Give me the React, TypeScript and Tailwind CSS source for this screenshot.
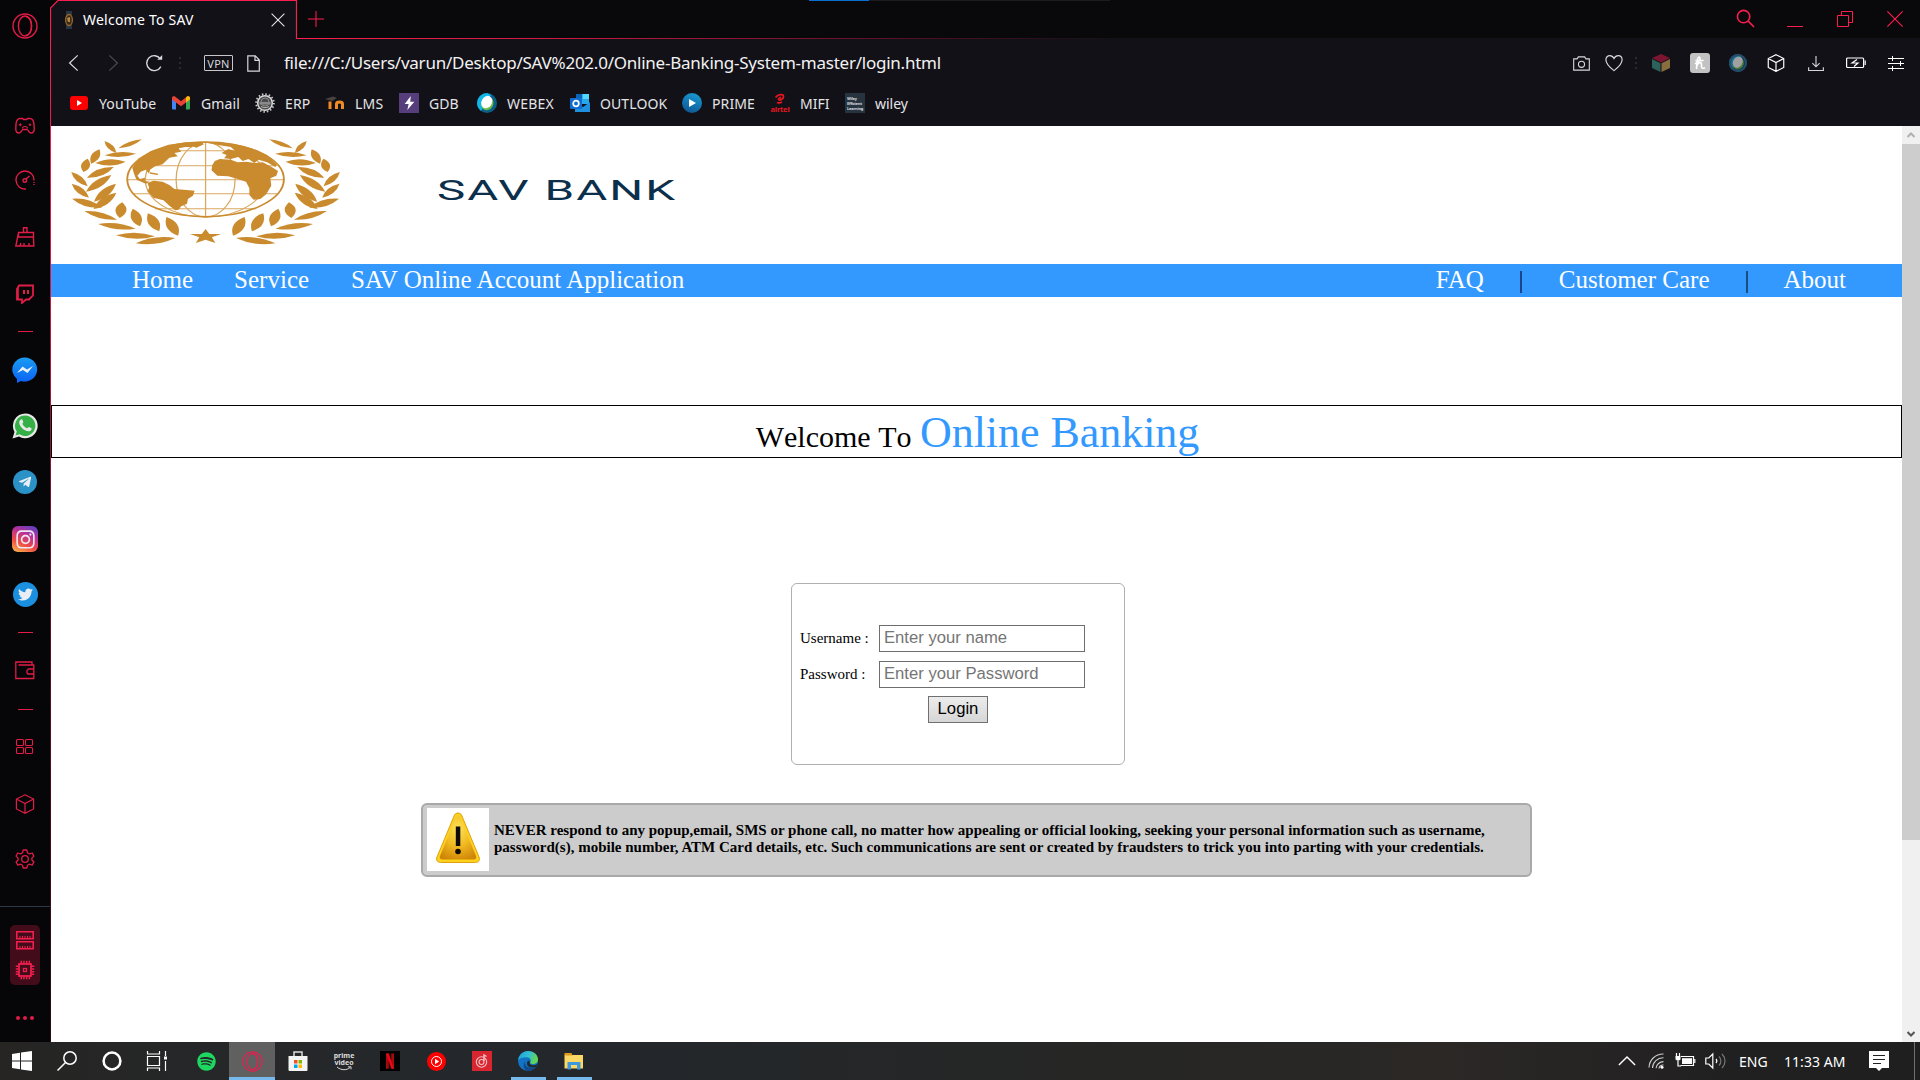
import React from "react";
import {
  FaSpotify,
  FaTwitter,
  FaInstagram,
  FaTelegramPlane,
} from "react-icons/fa";

type IconProps = { className?: string };

/* ---------- generic stroke icon ---------- */
function Line({
  size = 20,
  w = 1.2,
  className = "",
  children,
}: {
  size?: number;
  w?: number;
  className?: string;
  children: React.ReactNode;
}) {
  return (
    <svg
      width={size}
      height={size}
      viewBox="0 0 20 20"
      fill="none"
      stroke="currentColor"
      strokeWidth={w}
      className={`shrink-0 ${className}`}
    >
      {children}
    </svg>
  );
}

const OperaRing = ({ className = "" }: IconProps) => (
  <svg width="26" height="26" viewBox="0 0 26 26" fill="none" stroke="currentColor" strokeWidth="1.4" className={className}>
    <circle cx="13" cy="13" r="12" />
    <ellipse cx="13" cy="13" rx="6.6" ry="10" />
    <path d="M14 3.5c4 1 5.500 5 5.500 9.500s-1.500 8.500-5.500 9.500" />
  </svg>
);

const Box = ({ size = 20, w = 1.2 }: { size?: number; w?: number }) => (
  <Line size={size} w={w}>
    <path d="M10 .8l8.600 4.200v10L10 19.300 1.400 15V5zM1.400 5L10 9.500 18.600 5M10 9.500v9.800" />
  </Line>
);

const WebexBall = ({ className = "" }: IconProps) => (
  <svg width="20" height="20" viewBox="0 0 20 20" className={className}>
    <circle cx="10" cy="10" r="10" fill="#0b5f86" />
    <path d="M10 0a10 10 0 0 0-10 10c0 3 1.500 6 4 8L14 2z" fill="#12b5e8" />
    <ellipse cx="10.500" cy="10.300" rx="6" ry="6.800" transform="rotate(30 10 10)" fill="#6cc04a" />
    <ellipse cx="9.300" cy="9.300" rx="5.200" ry="6.500" transform="rotate(30 10 10)" fill="#fff" />
  </svg>
);

/* ---------- sidebar ---------- */
const Dash = () => <div className="h-px w-[15px] bg-[#e01c47]" />;

const Gamepad = () => (
  <Line size={20} w={1.4}>
    <path d="M5 2.500C2.800 2.500 1.500 4 1 8L.8 13C.8 15.800 2 17 4 17 6 17 6.200 14.500 8 13.500H12C13.800 14.500 14 17 16 17 18 17 19.200 15.800 19.200 13L19 8C18.500 4 17.200 2.500 15 2.500H12.500L11.500 3.500H8.500L7.500 2.500Z" />
    <path d="M7.500 12.500a2.500 2 0 0 1 5 0M3.800 8.800h3M5.300 7.300v3M13.800 8.800h2.400M15 7.600v2.400" strokeWidth="1.100" />
  </Line>
);
const Gauge = () => (
  <Line size={20} w={1.4}>
    <path d="M11 19A9 9 0 1 1 19 10.500" />
    <path d="M19 12v4" strokeDasharray="1 1" />
    <circle cx="9.800" cy="10.500" r="1.800" />
    <path d="M11 9l3.500-3" />
  </Line>
);
const Broom = () => (
  <Line size={20} w={1.4}>
    <path d="M8.500 5.500V.8h3.500v4.700M3.500 5.500h15v4.500h-15zM3.500 6L.8 19h18l-.3-9M5 19l.8-3M9 19v-3M14 19v-3" />
  </Line>
);
const Twitch = () => (
  <Line size={20} w={1.8}>
    <path d="M4 1.500h14v10l-4 4h-3l-4 3.500v-3.500H2V5z" />
    <path d="M2.800 4v11" strokeWidth="2" />
    <path d="M9 6v4M13 6v4" strokeWidth="2" />
  </Line>
);
const Messenger = () => (
  <svg width="26" height="26" viewBox="0 0 26 26">
    <defs>
      <linearGradient id="msg" x1="0" y1="0" x2="0" y2="1">
        <stop offset="0" stopColor="#1a9cf0" />
        <stop offset="1" stopColor="#0a62f5" />
      </linearGradient>
    </defs>
    <path d="M13 .5a12.300 12 0 1 1-4 23.400L5 26v-4A12 12 0 0 1 13 .5z" fill="url(#msg)" />
    <path d="M5 16l5.500-6.500 4.500 3 6-3.500-5.500 7-4.500-3z" fill="#e8f1fb" />
  </svg>
);
const WhatsApp = () => (
  <svg width="26" height="26" viewBox="0 0 26 26">
    <path d="M13.300.4A12.400 12.400 0 1 1 7 23.500L.5 25.500 2.500 19A12.500 12.500 0 0 1 13.300.4z" fill="#e8e8e8" />
    <path d="M13.300 2.600A10.200 10.200 0 1 1 7.500 21.300l-4 1.300 1.300-4A10.200 10.200 0 0 1 13.300 2.600z" fill="#35b046" />
    <path d="M9 6.500c1-.5 1.400 0 2.300 2.500.2.800-1 1.500-.8 2 1 2 2.500 3.500 4.500 4.200.6.200 1.300-1.500 2-1.300 2.500 1 3 1.300 2.500 2.500-1 2.500-4 2.300-7 .6C9 15 6.300 10.500 7.500 8c.3-.8.900-1.300 1.500-1.500z" fill="#e8e8e8" />
  </svg>
);
const Telegram = () => (
  <div className="flex size-6 items-center justify-center rounded-full bg-[#2a92c6] text-[#e8eef4]">
    <FaTelegramPlane size={14} />
  </div>
);
const Insta = () => (
  <div className="flex size-[26px] items-center justify-center rounded-[6px] bg-[linear-gradient(25deg,#f9b04a_5%,#ef4a45_35%,#b92f9a_65%,#4a46c8_100%)] text-[#efe8f0]">
    <FaInstagram size={21} />
  </div>
);
const Twitter = () => (
  <div className="flex size-[25px] items-center justify-center rounded-full bg-[#1b8fe0] text-[#e8eef4]">
    <FaTwitter size={15} />
  </div>
);
const Wallet = () => (
  <Line size={20} w={1.3}>
    <path d="M17 5V2H.8v16.500h18V5H3.500M18.800 9H13.500l-1.500 1.500V13l1 1h5.800" />
  </Line>
);
const Grid4 = () => (
  <Line size={20} w={1.1}>
    <rect x="1.500" y="2.500" width="7" height="6" rx="1" />
    <rect x="10.500" y="2.500" width="7" height="6" rx="1" />
    <rect x="1.500" y="10.500" width="7" height="6" rx="1" />
    <rect x="10.500" y="10.500" width="7" height="6" rx="1" />
  </Line>
);
const Gear = () => (
  <Line size={20} w={1.3}>
    <circle cx="10" cy="10" r="3.300" />
    <path d="M8.200 1h3.600l.7 2.800 1.900 1.100 2.800-.9 1.700 3.100-2 2v1.900l2 2-1.700 3.100-2.800-.9-1.900 1.100-.7 2.700H8.200l-.7-2.700-1.900-1.100-2.800.9L1.100 13l2-2V9.100l-2-2L2.800 4l2.800.9 1.900-1.100z" strokeLinejoin="round" />
  </Line>
);
const Ram = () => (
  <Line size={20} w={1.6}>
    <path d="M1.800 1.800h16.400v7H1.800zM1.800 11.800h16.400v7H1.800z" />
    <path d="M4.500 7h12M4.500 17h12" strokeDasharray="1 1.500" strokeWidth="2" />
  </Line>
);
const Chip = () => (
  <Line size={20} w={1.8}>
    <rect x="4" y="4" width="12" height="12" />
    <rect x="8.500" y="8.500" width="3" height="3" strokeWidth="1.300" />
    <path d="M5.500 2h10M5.500 18h10M2 5.500v10M18 5.500v10" strokeDasharray="1.500 1.200" strokeWidth="2.500" />
  </Line>
);

function Cell({ h, children }: { h: string; children: React.ReactNode }) {
  return <div className={`flex w-full shrink-0 items-center justify-center ${h}`}>{children}</div>;
}

function Sidebar() {
  return (
    <aside className="flex h-[1042px] w-[50px] shrink-0 flex-col items-center overflow-hidden bg-[#060608] text-[#e01c47]">
      <Cell h="h-[52px]"><OperaRing /></Cell>
      <div className="h-[47px] shrink-0" />
      <Cell h="h-[54px]"><Gamepad /></Cell>
      <Cell h="h-[54px]"><Gauge /></Cell>
      <Cell h="h-[60px]"><Broom /></Cell>
      <Cell h="h-[54px]"><Twitch /></Cell>
      <Cell h="h-[21px]"><Dash /></Cell>
      <Cell h="h-[56px]"><Messenger /></Cell>
      <Cell h="h-[56px]"><WhatsApp /></Cell>
      <Cell h="h-[56px]"><Telegram /></Cell>
      <Cell h="h-[58px]"><Insta /></Cell>
      <Cell h="h-[53px]"><Twitter /></Cell>
      <Cell h="h-[23px]"><Dash /></Cell>
      <Cell h="h-[52px]"><Wallet /></Cell>
      <Cell h="h-[27px]"><Dash /></Cell>
      <Cell h="h-[47px]"><Grid4 /></Cell>
      <Cell h="h-[68px]"><Box size={20} w={1.2} /></Cell>
      <Cell h="h-[42px]"><Gear /></Cell>
      <div className="mt-[26px] h-px w-full shrink-0 bg-[#2f3a48]" />
      <div className="mt-[18px] flex h-[60px] w-[30px] shrink-0 flex-col items-center justify-between rounded-[5px] bg-[#420c1b] py-[5px] text-[#f01f4d]">
        <Ram />
        <Chip />
      </div>
      <div className="mt-[31px] flex gap-[3px]">
        <i className="size-1 rounded-full bg-[#e01c47]" />
        <i className="size-1 rounded-full bg-[#e01c47]" />
        <i className="size-1 rounded-full bg-[#e01c47]" />
      </div>
    </aside>
  );
}

/* ---------- browser chrome ---------- */
function TabBar() {
  return (
    <div className="flex h-[39px] bg-[#09090b] text-[#fa1e4e]">
      <div className="relative flex h-[39px] w-[247px] shrink-0 items-center bg-[#121118] pl-[13px]">
        <svg width="247" height="39" className="absolute top-0 left-0">
          <path d="M0 0H8L0 8z" fill="#060608" />
          <path d="M.5 39V8L8 .5h238.500V39" fill="none" stroke="#fa1e4e" strokeWidth="1.200" />
        </svg>
        <svg width="12" height="18" viewBox="0 0 12 18">
          <path d="M3 0h6v4H3zM3 14h6v4H3z" fill="#2b3442" />
          <ellipse cx="6" cy="9" rx="3.400" ry="5.500" fill="#3a2c1c" stroke="#966a2e" strokeWidth="1.300" />
          <path d="M4 7l3-1v5H5z" fill="#b9863c" />
        </svg>
        <span className="ml-[8px] w-[188px] text-[14px] tracking-[0.230px] whitespace-nowrap text-white">Welcome To SAV</span>
        <Line size={16} w={1.3} className="absolute left-[220px] top-[12px] text-[#e8e8e8]">
          <path d="M2 2l16 16M18 2L2 18" />
        </Line>
      </div>
      <div className="flex flex-1 flex-col">
        <div className="flex flex-1">
          <Line size={16} w={1.3} className="mt-[11px] ml-[11px]">
            <path d="M10 0v20M0 10h20" />
          </Line>
          <div className="ml-[485px] h-px w-[60px] bg-[#0a6fd0]" />
          <div className="h-px w-[241px] bg-[#1c1c1f]" />
          <div className="ml-auto flex items-center pr-[16px]">
            <Line size={19} w={1.7} className="-mt-px">
              <circle cx="8" cy="8" r="6.500" />
              <path d="M12.800 12.800L19 19" />
            </Line>
            <div className="mt-[15px] ml-[32px] h-px w-4 bg-[#fa1e4e]" />
            <svg width="18" height="18" viewBox="0 0 18 18" fill="none" stroke="currentColor" className="ml-[33px]">
              <path d="M1.500 5.500h11v11h-11zM5.500 5.500v-4h11v11h-4" />
            </svg>
            <Line size={18} w={1.3} className="ml-[32px]">
              <path d="M1.500 1.500l17 17M18.500 1.500l-17 17" />
            </Line>
          </div>
        </div>
        <div className="h-px bg-[linear-gradient(90deg,#fa1e4e_0px,#d01a42_250px,#4a1022_640px,#121118_820px)]" />
      </div>
    </div>
  );
}

const Dots = ({ className = "" }: IconProps) => (
  <svg width="2" height="14" className={className}>
    <path d="M1 1v13" stroke="#44444c" strokeDasharray="2 3" />
  </svg>
);

function AddressBar() {
  return (
    <div className="flex h-[48px] items-center bg-[#121118] text-[#d8d8da]">
      <Line size={18} w={1.4} className="ml-[15px]">
        <path d="M13 1.500L4 10l9 8.500" />
      </Line>
      <Line size={18} w={1.4} className="ml-[19px] text-[#4a4a52]">
        <path d="M7 1.500L16 10l-9 8.500" />
      </Line>
      <Line size={18} w={1.5} className="ml-[25px]">
        <path d="M16.500 14a8.300 8.300 0 1 1-.5-8.500" />
        <path d="M18 1v5.500h-5.500z" fill="currentColor" stroke="none" />
      </Line>
      <Dots className="ml-[15px]" />
      <div className="ml-[23px] flex h-4 w-[29px] items-center justify-center rounded-[1px] border border-[#c8c8ca] text-[11px] leading-none tracking-[0.300px]">
        VPN
      </div>
      <svg width="13" height="17" viewBox="0 0 13 17" fill="none" stroke="currentColor" strokeWidth="1.200" className="ml-[14px]">
        <path d="M.8.8h7.500l4 4.200v11.200H.8zM8 .8V5.300h4.300" />
      </svg>
      <span className="ml-[24px] text-[17px] tracking-[-0.240px] whitespace-nowrap text-[#f2f2f2]">
        file:///C:/Users/varun/Desktop/SAV%202.0/Online-Banking-System-master/login.html
      </span>
      <div className="ml-auto flex items-center pr-[15px]">
        <Line size={17} w={1.3}>
          <path d="M.8 4.500h4l1.500-2.300h7.400l1.500 2.300h4v13.300H.8z" />
          <circle cx="10" cy="11" r="3.600" />
        </Line>
        <Line size={18} w={1.3} className="ml-[15px]">
          <path d="M10 18.500C4 14 1 11 1 6.500 1 3.500 3 1.800 5.300 1.800S9 3 10 5c1-2 2.500-3.200 4.700-3.200S19 3.500 19 6.500c0 4.500-3 7.500-9 12z" />
        </Line>
        <Dots className="ml-[12px]" />
        <svg width="20" height="20" viewBox="0 0 20 20" className="ml-[14px]">
          <path d="M10 1l9 4-9 4.500L1 5z" fill="#7c1530" />
          <path d="M1 6l8.500 4.200V19L1 15z" fill="#2c6259" />
          <path d="M19 6l-8.500 4.200V19l8.500-4z" fill="#8a6d3e" />
        </svg>
        <div className="ml-[19px] flex size-5 items-center justify-center rounded-[3px] bg-[#c2c2c2]">
          <svg width="12" height="14" viewBox="0 0 12 14" fill="none" stroke="#fff" strokeWidth="1.600" strokeLinecap="round">
            <path d="M1.500 7.500C5 6 7 3 5.500 1.200 3.500.5 3 5 2.500 12.500M3 9.500C4 6.500 7.500 5.500 7.500 8c0 2.500-.5 5 3 4M2 4.500h7" />
          </svg>
        </div>
        <div className="relative ml-[19px] size-[18px]">
          <WebexBall className="size-[18px] opacity-60" />
          <div className="absolute inset-0 rounded-full border-2 border-[#274d66]" />
        </div>
        <div className="ml-[20px] text-white"><Box size={18} w={1.3} /></div>
        <Line size={16} w={1.4} className="ml-[23px] mt-[2px]">
          <path d="M10 0v13M5.500 9l4.500 4.500L14.500 9M.8 14v4.200h18.400V14" />
        </Line>
        <svg width="20" height="12" viewBox="0 0 20 12" fill="none" stroke="#fff" strokeWidth="1.200" className="ml-[22px]">
          <rect x=".6" y="1" width="17" height="9.500" rx="1" />
          <path d="M19.200 3.500v4.500M11 2.500L6 6h6L8 9.500" />
        </svg>
        <svg width="17" height="16" viewBox="0 0 17 16" fill="none" stroke="#fff" className="ml-[22px]">
          <path d="M0 3.500h16M0 8.500h16M0 13.500h16M4.500 1v5M12.500 6v5M4.500 11v5" />
        </svg>
      </div>
    </div>
  );
}

const YouTube = () => (
  <div className="flex h-[14px] w-[18px] items-center justify-center rounded-[3px] bg-[#f00]">
    <svg width="6" height="6"><path d="M1 0l5 3-5 3z" fill="#fff" /></svg>
  </div>
);
const Gmail = () => (
  <svg width="18" height="14" viewBox="0 0 18 14">
    <path d="M0 2v10.500a1 1 0 0 0 1 1h3V5z" fill="#4285f4" />
    <path d="M18 2v10.500a1 1 0 0 1-1 1h-3V5z" fill="#34a853" />
    <path d="M0 2C0 .3 1.800-.2 3 .6l6 4.700 6-4.700c1.200-.8 3-.3 3 1.400v1.500L9 10.200 0 3.500z" fill="#ea4335" />
    <path d="M14 1.400l1-.8c1.200-.8 3-.3 3 1.400v1.500l-4 3z" fill="#fbbc04" />
  </svg>
);
const Erp = () => (
  <svg width="20" height="20" viewBox="0 0 20 20">
    <circle cx="10" cy="10" r="8.900" fill="none" stroke="#c8c8c8" strokeWidth="1.800" strokeDasharray="1.500 2" />
    <circle cx="10" cy="10" r="7.300" fill="#4a4a4a" stroke="#d8d8d8" strokeWidth="1.500" />
    <circle cx="10" cy="9" r="4" fill="none" stroke="#8c8c8c" />
    <path d="M4.500 9h11v2.500h-11z" fill="#8a8a8a" />
    <path d="M6 13.500c2.500 1.500 5.500 1.500 8 0" stroke="#b8b8b8" fill="none" />
  </svg>
);
const Moodle = () => (
  <svg width="20" height="20" viewBox="0 0 20 20" fill="none">
    <path d="M0 6l8-2.500 4 1.500-5 3z" fill="#4a4440" />
    <path d="M5 16V8.500M11.500 16v-5c0-2.600 6-2.600 6 0v5" stroke="#f08a24" strokeWidth="3" />
  </svg>
);
const Gdb = () => (
  <div className="flex size-5 items-center justify-center bg-[#563d7c]">
    <svg width="11" height="14" viewBox="0 0 12 16"><path d="M7.500 0L.5 9h4.500L3.500 16l8-9.500H6.800z" fill="#fff" /></svg>
  </div>
);
const Outlook = () => (
  <svg width="20" height="18" viewBox="0 0 20 18">
    <path d="M6 0h13v10H6z" fill="#28a8ea" />
    <path d="M6 0h6.500v5H6z" fill="#0a63b5" />
    <path d="M12.500 0H19v5h-6.500z" fill="#50d9ff" />
    <path d="M5 9l8 4 7-5v10H5z" fill="#1f8fe0" />
    <rect y="4" width="12" height="11" rx="1" fill="#0f6cd0" />
    <circle cx="6" cy="9.500" r="2.800" fill="none" stroke="#fff" strokeWidth="1.700" />
  </svg>
);
const Prime = () => (
  <div className="flex size-5 items-center justify-center rounded-full bg-[linear-gradient(20deg,#0d4f8c,#1aa0d8)]">
    <svg width="8" height="8"><path d="M1 0l7 4-7 4z" fill="#fff" /></svg>
  </div>
);
const Airtel = () => (
  <div className="flex h-5 w-[18px] flex-col items-center">
    <svg width="12" height="12" viewBox="0 0 12 12" fill="none" stroke="#e8151f" strokeWidth="1.800">
      <path d="M1.500 4.500C4 1 9.500.5 9.500 3.500S5 8 4.500 6.500C4.300 5.500 6 4.500 7 4.500M3 9.500c2 .8 3.500.5 5-.5" />
    </svg>
    <span className="text-[7.500px] leading-[8px] font-bold tracking-[-0.200px] text-[#e8151f]">airtel</span>
  </div>
);
const Wiley = () => (
  <div className="flex size-5 flex-col justify-center overflow-hidden bg-[#27333f] pl-[2px] text-[4px] leading-[5px] font-bold tracking-[-0.200px] whitespace-nowrap text-[#d8dde2]">
    <span>Wiley</span>
    <span>Efficient</span>
    <span>Learning</span>
  </div>
);

function Bookmark({ icon, label, w, ls = "" }: { icon: React.ReactNode; label: string; w: string; ls?: string }) {
  return (
    <div className={`flex shrink-0 items-center ${w}`}>
      <div className="flex w-5 shrink-0 items-center justify-center">{icon}</div>
      <span className={`ml-[10px] text-[14px] whitespace-nowrap ${ls}`}>{label}</span>
    </div>
  );
}

function Bookmarks() {
  return (
    <div className="flex h-[39px] bg-[#121118] pb-[7px] pl-[18px] text-[#e4e4e6]">
      <Bookmark w="w-[102px]" icon={<YouTube />} label="YouTube" ls="tracking-[0.100px]" />
      <Bookmark w="w-[84px]" icon={<Gmail />} label="Gmail" ls="tracking-[0.100px]" />
      <Bookmark w="w-[70px]" icon={<Erp />} label="ERP" ls="tracking-[0.100px]" />
      <Bookmark w="w-[74px]" icon={<Moodle />} label="LMS" ls="tracking-[0.200px]" />
      <Bookmark w="w-[78px]" icon={<Gdb />} label="GDB" />
      <Bookmark w="w-[93px]" icon={<WebexBall />} label="WEBEX" ls="tracking-[0.200px]" />
      <Bookmark w="w-[112px]" icon={<Outlook />} label="OUTLOOK" ls="tracking-[0.100px]" />
      <Bookmark w="w-[88px]" icon={<Prime />} label="PRIME" ls="tracking-[0.100px]" />
      <Bookmark w="w-[75px]" icon={<Airtel />} label="MIFI" />
      <Bookmark w="w-[80px]" icon={<Wiley />} label="wiley" />
    </div>
  );
}

/* ---------- bank page ---------- */
/* Each leaf: x1, y1, x2, y2, half width */
const LEAVES: number[][] = [
  [163, 84, 219, 57, 12],
  [130, 62, 158, 98, 14],
  [130, 105, 205, 100, 15],
  [98, 130, 118, 87, 20],
  [108, 128, 180, 124, 19],
  [80, 155, 90, 115, 21],
  [88, 172, 152, 140, 20],
  [51, 155, 90, 198, 17],
  [86, 214, 146, 164, 21],
  [52, 190, 93, 232, 17],
  [105, 244, 157, 190, 21],
  [53, 235, 124, 262, 19],
  [104, 266, 158, 217, 21],
  [82, 272, 160, 298, 17],
  [166, 293, 172, 246, 26],
  [115, 311, 204, 325, 17],
  [197, 265, 214, 318, 25],
  [157, 345, 250, 348, 18],
  [233, 279, 260, 333, 26],
  [204, 369, 298, 353, 18],
  [277, 290, 305, 346, 26],
];

function leafPath([x1, y1, x2, y2, w]: number[]) {
  const dx = x2 - x1;
  const dy = y2 - y1;
  const l = Math.hypot(dx, dy);
  const nx = (-dy / l) * w;
  const ny = (dx / l) * w;
  const mx = (x1 + x2) / 2;
  const my = (y1 + y2) / 2;
  return `M${x1} ${y1}Q${mx + nx} ${my + ny} ${x2} ${y2}Q${mx - nx} ${my - ny} ${x1} ${y1}Z`;
}

function Emblem() {
  return (
    <svg width="272" height="109" viewBox="48 50 646 327" preserveAspectRatio="none" fill="#c98b2e">
      <g>{LEAVES.map((l, i) => <path key={i} d={leafPath(l)} />)}</g>
      <g transform="translate(740 0) scale(-1 1)">{LEAVES.map((l, i) => <path key={i} d={leafPath(l)} />)}</g>
      <g fill="none" stroke="#d9a860" strokeWidth="3">
        <path d="M370 66V290M250 91h240M205 136h330M184 178h372M200 220h340M250 265h240" />
        <ellipse cx="370" cy="178" rx="70" ry="112" />
        <ellipse cx="370" cy="178" rx="143" ry="112" />
      </g>
      <ellipse cx="370" cy="177" rx="186" ry="112" fill="none" stroke="#c98b2e" strokeWidth="4.500" />
      <path d="M196 142L210 115 240 92 282 73 325 66 342 70 338 80 322 80 306 84 312 94 296 98 304 108 284 112 268 132 250 138 238 148 236 160 228 148 216 154 208 166 214 176 226 172 226 182 238 184 228 190 206 178 200 160Z" />
      <path d="M232 188L246 181 268 184 284 194 296 206 318 208 344 211 340 226 328 236 326 250 312 258 306 268 298 270 284 256 270 240 246 232 232 212 236 202Z" />
      <path d="M238 156l20 4-2 4-18-4zM336 66l24-2 6 8-18 10-16-8z" />
      <path d="M366 66L400 66 440 72 480 84 516 104 540 134 536 140 516 126 496 118 486 128 472 116 458 122 448 110 430 116 414 114 420 104 408 98 424 86 440 92 430 80 400 74Z" />
      <path d="M392 122L404 116 430 118 446 126 466 124 488 128 506 126 530 142 542 152 538 166 524 174 526 196 514 222 500 236 484 238 474 224 474 204 466 184 446 176 424 168 398 166 384 150 386 134Z" />
      <path d="M370 326l9 15h28l-22 10 8 17-23-10-23 10 8-17-22-10h28z" />
    </svg>
  );
}

function Warning() {
  return (
    <svg width="46" height="52" viewBox="0 0 46 52" className="-mt-[3px]">
      <defs>
        <radialGradient id="warn" cx=".5" cy=".3" r=".75">
          <stop offset="0" stopColor="#fde25a" />
          <stop offset=".5" stopColor="#f2bb22" />
          <stop offset="1" stopColor="#cf8608" />
        </radialGradient>
      </defs>
      <path d="M19.500 3c1.500-2.600 5.500-2.600 7 0l17.500 42c1.200 3-.5 5.500-3.500 5.500h-35C2.500 50.500.8 48 2 45z" fill="#fcd21c" stroke="#e0a010" />
      <path d="M20.500 5.500c1-1.800 4-1.800 5 0L41 44c.8 2-.3 3.500-2 3.500H7c-1.700 0-2.800-1.500-2-3.500z" fill="url(#warn)" />
      <path d="M20.800 14.500h4.500V34h-4.500z" fill="#100c04" />
      <circle cx="23" cy="39.500" r="2.800" fill="#100c04" />
    </svg>
  );
}

function Field({ label, placeholder }: { label: string; placeholder: string }) {
  return (
    <div className="flex h-9 items-start pl-[8px]">
      <label className="w-[79px] pt-[2px] text-[15px] leading-[22px]">{label}</label>
      <input
        placeholder={placeholder}
        className="h-[27px] w-[206px] border border-[#6e6e6e] bg-white pb-[2px] pl-1 font-['Liberation_Sans',Arial,sans-serif] text-[16.670px] placeholder:text-[#757575]"
      />
    </div>
  );
}

function Page() {
  return (
    <main className="flex h-[916px] w-[1851px] flex-col bg-white font-['Liberation_Serif','Times_New_Roman',serif] text-black">
      <header className="flex h-[138px] shrink-0">
        <div className="mt-[11px] ml-[19px]"><Emblem /></div>
        <div className="mt-[53px] ml-[95px] h-[24px] w-[240px]">
          <div className="origin-left scale-x-[1.700] font-[Roboto,sans-serif] text-[28px] leading-[24px] tracking-[1.200px] whitespace-nowrap text-[#0c2f4b]">
            SAV BANK
          </div>
        </div>
      </header>
      <nav className="flex h-[33px] shrink-0 items-center bg-[#3399ff] pr-[56px] pb-[2px] pl-[81px] text-[25px] leading-[31px] whitespace-nowrap text-white">
        <a>Home</a>
        <a className="ml-[41px]">Service</a>
        <a className="ml-[42px]">SAV Online Account Application</a>
        <a className="ml-auto">FAQ</a>
        <i className="mt-[4px] ml-[36px] h-[22px] w-[2px] bg-[#1b448c]" />
        <a className="ml-[37px]">Customer Care</a>
        <i className="mt-[4px] ml-[36px] h-[22px] w-[2px] bg-[#1a4d80]" />
        <a className="ml-[36px]">About</a>
      </nav>
      <h1 className="mt-[108px] flex h-[53px] shrink-0 items-baseline justify-center border border-black pl-[2px] text-[30px] leading-[54px] whitespace-pre">
        <span className="[font-kerning:none]">Welcome To </span>
        <span className="ml-px text-[44px] tracking-[-0.040px] text-[#3399ff]">Online Banking</span>
      </h1>
      <form className="mt-[125px] ml-[740px] h-[182px] w-[334px] shrink-0 rounded-[6px] border border-[#b0b0b0] pt-[41px]">
        <Field label="Username :" placeholder="Enter your name" />
        <Field label="Password :" placeholder="Enter your Password" />
        <button
          type="button"
          className="-mt-px ml-[136px] flex h-[27px] w-[60px] items-center justify-center border border-[#707070] bg-linear-to-b from-[#ececec] to-[#d6d6d6] pb-[2px] font-['Liberation_Sans',Arial,sans-serif] text-[16.670px]"
        >
          Login
        </button>
      </form>
      <section className="mt-[38px] ml-[370px] flex h-[74px] w-[1111px] shrink-0 items-center rounded-[6px] border-2 border-[#a9a9a9] bg-[#cccccc] pb-[2px] pl-1">
        <div className="flex h-[63px] w-[62px] shrink-0 items-center justify-center bg-white">
          <Warning />
        </div>
        <p className="ml-[5px] text-[15px] leading-[17px] font-bold whitespace-nowrap">
          NEVER respond to any popup,email, SMS or phone call, no matter how appealing or official looking, seeking your personal information such as username,
          <br />
          password(s), mobile number, ATM Card details, etc. Such communications are sent or created by fraudsters to trick you into parting with your credentials.
        </p>
      </section>
    </main>
  );
}

function Scrollbar() {
  return (
    <div className="flex w-[18px] flex-col bg-[#f0f0f0]">
      <div className="flex h-[18px] items-center justify-center">
        <svg width="8" height="6" fill="none" stroke="#b0b0b0" strokeWidth="2"><path d="M.5 5L4 1.500 7.500 5" /></svg>
      </div>
      <div className="h-[696px] bg-[#cdcdcd]" />
      <div className="mt-auto flex h-[16px] items-center justify-center">
        <svg width="8" height="6" fill="none" stroke="#555" strokeWidth="2"><path d="M.5 1L4 4.500 7.500 1" /></svg>
      </div>
    </div>
  );
}

/* ---------- taskbar ---------- */
function Task({ children, w = "w-[46px]", active = "", bar = "" }: { children: React.ReactNode; w?: string; active?: string; bar?: string }) {
  return (
    <div className={`relative flex h-full shrink-0 items-center justify-center ${w} ${active}`}>
      {children}
      {bar && <div className={`absolute bottom-0 h-[3px] bg-[#76b9ed] ${bar}`} />}
    </div>
  );
}

function Taskbar() {
  return (
    <footer className="flex h-[38px] bg-[linear-gradient(90deg,#262524_0%,#25282b_20%,#23272b_32%,#262624_60%,#2b2826_75%,#212021_90%,#1f1f20_100%)] text-white">
      <Task w="w-[44px]">
        <svg width="20" height="20" viewBox="0 0 20 20" fill="#fff">
          <path d="M0 3l8-1.200v7.700H0zM9 1.600L20 0v9.500H9zM0 10.500h8v7.700L0 17zM9 10.500h11V20L9 18.400z" />
        </svg>
      </Task>
      <Task w="w-[45px]">
        <Line size={20} w={1.5}><circle cx="13" cy="7" r="6.200" /><path d="M8.500 11.500L.5 19.500" /></Line>
      </Task>
      <Task w="w-[45px]">
        <Line size={20} w={2.5}><circle cx="10" cy="10" r="8.400" /></Line>
      </Task>
      <Task w="w-[49px]">
        <svg width="22" height="20" viewBox="0 0 22 20" fill="none" stroke="#fff" strokeWidth="1.200" className="-ml-[4px]">
          <path d="M1.500 5.500h12v9h-12zM1.500 0v3h12V0M1.500 20v-3h12v3M19.500 0v5M19.500 10v10" />
          <path d="M18 5.500h3v3h-3z" fill="#fff" stroke="none" />
        </svg>
      </Task>
      <Task><FaSpotify size={19} color="#1ed760" /></Task>
      <Task active="bg-[#606061]" bar="inset-x-0"><OperaRing className="size-[21px] text-[#ea1d4c]" /></Task>
      <Task>
        <svg width="20" height="20" viewBox="0 0 20 20" className="-ml-px">
          <path d="M6 6V1h8v5" fill="none" stroke="#dcdcdc" strokeWidth="1.500" />
          <path d="M.5 5h19v14a1 1 0 0 1-1 1h-17a1 1 0 0 1-1-1z" fill="#f4f4f4" />
          <path d="M6 9h3.500v3.500H6z" fill="#f25022" /><path d="M10.500 9H14v3.500h-3.500z" fill="#7fba00" />
          <path d="M6 13.500h3.500V17H6z" fill="#00a4ef" /><path d="M10.500 13.500H14V17h-3.500z" fill="#ffb900" />
        </svg>
      </Task>
      <Task>
        <div className="flex flex-col items-center text-[7px] font-bold text-[#dcdcdc]">
          <span className="h-[7px] leading-[7px]">prime</span>
          <span className="h-[7px] leading-[7px]">video</span>
          <svg width="16" height="5" fill="none" stroke="#dcdcdc"><path d="M1 1c4 3.500 10 3.500 13 .5M12 .8h3v2.500" /></svg>
        </div>
      </Task>
      <Task>
        <svg width="20" height="20" viewBox="0 0 20 20">
          <path d="M0 0h20v20H0z" fill="#000" />
          <path d="M6 2.500h2.800v15L6 18zM11.200 2.500H14V18l-2.800-.5z" fill="#a80812" />
          <path d="M6 2.500h2.800L14 18l-2.800-.5z" fill="#e50914" />
        </svg>
      </Task>
      <Task>
        <svg width="19" height="19" viewBox="0 0 19 19">
          <circle cx="9.500" cy="9.500" r="9.500" fill="#f00" />
          <circle cx="9.500" cy="9.500" r="5" fill="none" stroke="#fff" />
          <path d="M8 6.800l4.200 2.700L8 12.200z" fill="#fff" />
        </svg>
      </Task>
      <Task>
        <svg width="20" height="20" viewBox="0 0 20 20" fill="none" stroke="#f3c4c8" strokeWidth="1.100">
          <path d="M0 0h20v20H0z" fill="#d9252f" stroke="none" />
          <circle cx="9.500" cy="11" r="5.200" /><circle cx="9.500" cy="11" r="2.500" />
          <path d="M12 10V4l2.500 1.500" strokeWidth="1.400" />
        </svg>
      </Task>
      <Task bar="w-[35px]">
        <svg width="20" height="20" viewBox="0 0 20 20">
          <defs>
            <linearGradient id="edge" x1="0" y1="0" x2="1" y2=".3">
              <stop offset="0" stopColor="#1b9de2" /><stop offset=".6" stopColor="#35c1cf" /><stop offset="1" stopColor="#62d850" />
            </linearGradient>
          </defs>
          <circle cx="10" cy="10" r="10" fill="#1273c4" />
          <path d="M0 9.500C1 3.500 5 0 10 0c6 0 10 4 10 8.500 0 3-2.500 4.500-5 4.500s-3.500-.8-2.500-2c1-2-.5-4.500-3.500-4.800C5 6 1.500 7 0 9.500z" fill="url(#edge)" />
          <path d="M7.500 9.500C5.500 15 10 18 17.500 16.500 15.500 19 12.500 20 10 20c-4-.8-6-5-2.500-10.500z" fill="#114a8b" />
          <path d="M12 11c-1 2 1 3.500 3.500 3.300 1.500 0 3-.8 4-1.600l-1.500 3.200c-4 1.500-9 .5-9-3.400 0-1 .5-2.500 1.500-3z" fill="#23282c" />
        </svg>
      </Task>
      <Task bar="w-[35px]">
        <svg width="20" height="18" viewBox="0 0 20 18">
          <path d="M.5 3h18.500v13.500H.5z" fill="#fbd765" />
          <path d="M.5 1h7l1 2.500h-8z" fill="#dd9c1d" />
          <path d="M3.500 10h13v7.500H13V13H7v4.500H3.500z" fill="#3f97dc" />
        </svg>
      </Task>
      <div className="ml-auto flex items-center">
        <Line size={18} w={1.6}><path d="M1 14.500l9-9 9 9" /></Line>
        <svg width="16" height="16" viewBox="0 0 16 16" fill="none" stroke="#d0d0d0" strokeWidth="1.100" className="ml-[12px]">
          <path d="M1 14.500A14 14 0 0 1 15.500 1M4.500 15A10.500 10.500 0 0 1 15.500 4.800M8 15.300a7.500 7.500 0 0 1 7.500-6.700" />
          <path d="M11 15.500a4 4 0 0 1 4.500-3.500" />
          <circle cx="14" cy="14.300" r="1.500" fill="#fff" stroke="none" />
        </svg>
        <svg width="21" height="16" viewBox="0 0 21 16" fill="none" stroke="#fff" strokeWidth="1.200" className="ml-[11px]">
          <path d="M6 3.500h12.500v9H5.500" /><path d="M7 5.200h10v5.800H7z" fill="#fff" stroke="none" />
          <path d="M19.800 6v4M1.500 0v3M4.500 0v3M3 7.500V13h3" /><path d="M.5 3h5v3.500l-1.500 1h-2l-1.500-1z" fill="#fff" stroke="none" />
        </svg>
        <svg width="21" height="18" viewBox="0 0 21 18" fill="none" stroke="#fff" strokeWidth="1.200" className="ml-[9px]">
          <path d="M.8 6h3l4-4v14l-4-4h-3z" /><path d="M11 7c1 1.200 1 2.800 0 4" />
          <path d="M14 4.500c2.500 2.500 2.500 6.500 0 9M17 2c4 4 4 10 0 14" stroke="#777" />
        </svg>
        <span className="ml-[13px] w-[45px] text-[14px]">ENG</span>
        <span className="w-[85px] text-[14px] tracking-[0.050px] whitespace-nowrap">11:33 AM</span>
        <svg width="20" height="20" viewBox="0 0 20 20">
          <path d="M0 0h20v17h-7l-3 3-3-3H0z" fill="#fff" />
          <path d="M4 4.500h12M4 8.500h12M4 12.500h8" stroke="#222" />
        </svg>
        <div className="mr-[5px] ml-[25px] h-[38px] w-px bg-[#707070]" />
      </div>
    </footer>
  );
}

export default function App() {
  return (
    <div className="h-[1080px] w-[1920px] overflow-hidden bg-[#060608] font-['Noto_Sans','Open_Sans',sans-serif]">
      <div className="flex h-[1042px]">
        <Sidebar />
        <div className="flex w-[1870px] flex-col">
          <TabBar />
          <div className="flex">
            <div className="w-px shrink-0 bg-[linear-gradient(180deg,#fa1e4e,#d01a42_250px,#6a1228_500px,#2a0a14_1000px)]" />
            <div className="flex flex-1 flex-col">
              <AddressBar />
              <Bookmarks />
              <div className="flex h-[916px]">
                <Page />
                <Scrollbar />
              </div>
            </div>
          </div>
        </div>
      </div>
      <Taskbar />
    </div>
  );
}
